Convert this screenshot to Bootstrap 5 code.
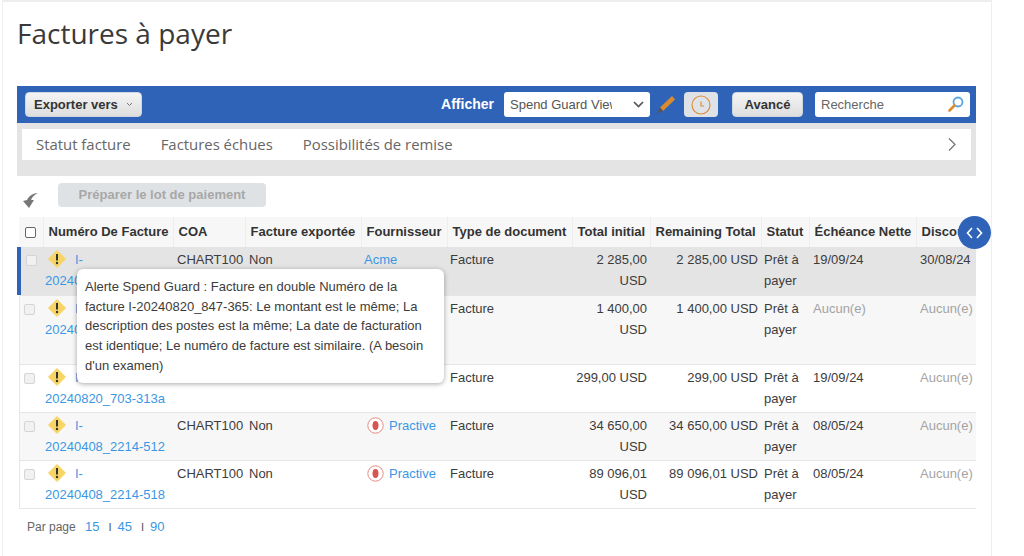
<!DOCTYPE html>
<html lang="fr">
<head>
<meta charset="utf-8">
<title>Factures à payer</title>
<link href="https://cdn.jsdelivr.net/npm/bootstrap@5.3.0/dist/css/bootstrap.min.css" rel="stylesheet">
<style>
html,body{height:556px;overflow:hidden}
body{background:#fff;font-family:"Liberation Sans",Arial,sans-serif;font-size:13px;color:#333}
.shell{margin:0 32px 0 2px;height:556px;border-top:2px solid #eee;border-left:1px solid #f0f0f0;border-right:1px solid #eee;width:990px;padding:0 14px;position:relative}
.page-h{font-family:"Open Sans",sans-serif;font-size:28px;line-height:38px;font-weight:400;color:#3a3a3a;margin:12px 0 34px 0}
.panel-x{width:959px}
.bluebar{background:#2f63b8;height:37px;padding:0 6px 0 8px}
.soft-btn{background:linear-gradient(#f4f4f4,#dedede);border:1px solid #cfd6e2;border-radius:4px;color:#333;font-weight:700;font-size:13px;height:25px;line-height:23px;padding:0 8px;white-space:nowrap}
.exp-btn{width:117px}
.adv-btn{width:71px;padding:0;text-align:center}
.show-lbl{color:#fff;font-weight:700;font-size:14px;margin-right:10px}
.view-sel{width:146px;height:25px;background:#fff;border-radius:3px;padding:0 6px;font-size:13px;color:#555}
.view-sel span{width:102px;overflow:hidden;white-space:nowrap}
.pen-ico{margin-left:6px}
.clock-btn{width:34px;height:25px;background:#dfe3e8;border-radius:4px;margin:0 14px 0 8px}
.search-x{width:155px;height:25px;background:#fff;border-radius:3px;padding:0 6px;color:#666;font-size:13px;margin-left:12px}
.graystrip{background:#e4e4e4;height:53px;padding:6px 5px 0 5px}
.navwhite{background:#fff;height:31px;padding:0 14px;font-family:"Open Sans",sans-serif;font-size:14.9px;color:#666}
.navwhite span{margin-right:30px}
.toolstrip{height:41px;padding:7px 0 0 6px}
.back-ico{margin-top:9px}
.pay-btn{background:#dfe2e5;color:#a8a8a8;font-weight:700;font-size:13px;height:24px;line-height:24px;width:208px;border-radius:4px;text-align:center;margin-left:19px}
.tblwrap{margin-left:2px;width:957px}
table.inv{table-layout:fixed;width:957px;border-collapse:collapse;margin:0}
table.inv th{background:#f7f7f7;font-weight:700;font-size:13px;height:30px;padding:0 5px;white-space:nowrap;overflow:hidden;border-right:1px solid #eee;color:#333;vertical-align:middle}
table.inv td{padding:2px 5px 0 3px;line-height:21px;vertical-align:top;border-bottom:1px solid #e6e6e6;font-size:13px;color:#3c3c3c}
table.inv td:first-child{box-shadow:inset 1px 0 0 #e6e6e6}
table.inv tr.sel td{background:#e4e4e4}
table.inv tr.alt td{background:#f7f7f7}
table.inv tr.sel td:first-child{box-shadow:-2px 0 0 #2f63b8,inset 2px 0 0 #2f63b8}
table.inv td a,.pager a{color:#3b97e3;text-decoration:none}
.r-1{height:48px}.r-2{height:69px}.r-3{height:48px}
.tick{width:11px;height:11px;border:1px solid #d5d5d5;border-radius:2px;background:#f1f1f1;display:block;margin:6px 0 0 2px}
tr.sel .tick{margin-left:4px}
.tickh{width:11px;height:11px;border:1.5px solid #666;border-radius:2px;background:#fff;display:block;margin-left:1px}
table.inv td.id-cell{padding-left:2px}
.warn{display:inline-block;vertical-align:-4px;margin:0 9px 0 3px}
.num{text-align:right;padding-right:3px!important}
.none{color:#a3a3a3!important}
.pad-4{padding-left:4px!important}
.tip-box{position:absolute;left:74px;top:267px;width:367px;height:114px;background:#fff;border-radius:6px;box-shadow:0 1px 5px rgba(0,0,0,.35);padding:8px 8px;font-size:13px;line-height:19.7px;color:#3c3c3c;z-index:5}
.roundb{position:absolute;left:955px;top:214px;width:33px;height:33px;border-radius:50%;background:#2f63b8;z-index:6}
.pager{font-size:12px;color:#666;padding:8px 0 0 10px;line-height:20px}
.pager a{font-size:13px;margin-left:6px}
.pager i{font-style:normal;margin-left:9px;color:#555;font-size:11px}
.vend{display:inline-block;vertical-align:-4px;margin-right:5px;margin-left:3px}
</style>
</head>
<body>
<div class="shell">
  <h1 class="page-h">Factures à payer</h1>
  <div class="panel-x">
    <div class="bluebar d-flex align-items-center">
      <div class="soft-btn exp-btn d-flex align-items-center gap-2">Exporter vers
        <svg width="7" height="5" viewBox="0 0 7 5"><path d="M1 1l2.500 2.500L6 1" fill="none" stroke="#777" stroke-width="1"/></svg>
      </div>
      <div class="ms-auto d-flex align-items-center">
        <span class="show-lbl">Afficher</span>
        <div class="view-sel d-flex align-items-center justify-content-between">
          <span>Spend Guard View</span>
          <svg width="11" height="7" viewBox="0 0 11 7"><path d="M1 1l4.500 4.500L10 1" fill="none" stroke="#555" stroke-width="1.700"/></svg>
        </div>
        <svg class="pen-ico" width="20" height="20" viewBox="0 0 20 20"><path d="M16 1l3 3.500L7 16 4 12.500z" fill="#dc8a2e"/><path d="M4 12.500L7 16 1 18.500z" fill="#555"/></svg>
        <div class="clock-btn d-flex align-items-center justify-content-center">
          <svg width="20" height="20" viewBox="0 0 20 20"><circle cx="10" cy="10" r="9" fill="none" stroke="#dc8f3c" stroke-width="1.200"/><path d="M10 6.500V11h3" fill="none" stroke="#dc8f3c" stroke-width="1.200"/></svg>
        </div>
        <div class="soft-btn adv-btn">Avancé</div>
        <div class="search-x d-flex align-items-center justify-content-between">
          <span>Recherche</span>
          <svg width="17" height="17" viewBox="0 0 17 17"><circle cx="11" cy="6" r="4.500" fill="#fff" stroke="#58a5e6" stroke-width="1.800"/><path d="M7.500 9.500L2.500 14.500" stroke="#dc8a2e" stroke-width="2.600" stroke-linecap="round"/></svg>
        </div>
      </div>
    </div>
    <div class="graystrip">
      <div class="navwhite d-flex align-items-center">
        <span>Statut facture</span><span>Factures échues</span><span>Possibilités de remise</span>
        <svg class="ms-auto" width="10" height="15" viewBox="0 0 10 15"><path d="M2 1.500l6 6-6 6" fill="none" stroke="#777" stroke-width="1.300"/></svg>
      </div>
    </div>
    <div class="toolstrip d-flex align-items-start">
      <svg class="back-ico" width="16" height="16" viewBox="0 0 16 16"><path d="M15 1C10 1 6 4 4 8L0 9l6 7 5-8H8c1-3 3-5 7-7z" fill="#777"/></svg>
      <div class="pay-btn">Préparer le lot de paiement</div>
    </div>
    <div class="tblwrap">
      <table class="inv">
        <colgroup>
          <col style="width:24px"><col style="width:130px"><col style="width:72px"><col style="width:116px"><col style="width:86px"><col style="width:125px"><col style="width:78px"><col style="width:111px"><col style="width:48px"><col style="width:107px"><col style="width:60px">
        </colgroup>
        <thead><tr>
          <th><span class="tickh"></span></th><th>Numéro De Facture</th><th>COA</th><th>Facture exportée</th><th>Fournisseur</th><th>Type de document</th><th>Total initial</th><th>Remaining Total</th><th>Statut</th><th>Échéance Nette</th><th>Discount</th>
        </tr></thead>
        <tbody>
          <tr class="sel r-1"><td><span class="tick"></span></td><td class="id-cell"><svg class="warn" width="18" height="18" viewBox="0 0 18 18"><path d="M9 0.500L17.500 9 9 17.500 0.500 9z" fill="#f7d565" stroke="#f7d565" stroke-linejoin="round"/><path d="M9 4v6.500" stroke="#333" stroke-width="2"/><circle cx="9" cy="13" r="1.200" fill="#333"/></svg><a href="#">I-<br>20240820_847-365</a></td><td class="pad-4">CHART100</td><td class="pad-4">Non</td><td><a href="#">Acme</a></td><td>Facture</td><td class="num">2 285,00 USD</td><td class="num">2 285,00 USD</td><td>Prêt à payer</td><td class="pad-4">19/09/24</td><td class="pad-4">30/08/24</td></tr>
          <tr class="alt r-2"><td><span class="tick"></span></td><td class="id-cell"><svg class="warn" width="18" height="18" viewBox="0 0 18 18"><path d="M9 0.500L17.500 9 9 17.500 0.500 9z" fill="#f7d565" stroke="#f7d565" stroke-linejoin="round"/><path d="M9 4v6.500" stroke="#333" stroke-width="2"/><circle cx="9" cy="13" r="1.200" fill="#333"/></svg><a href="#">I-<br>20240820_847-366</a></td><td></td><td></td><td></td><td>Facture</td><td class="num">1 400,00 USD</td><td class="num">1 400,00 USD</td><td>Prêt à payer</td><td class="none pad-4">Aucun(e)</td><td class="none pad-4">Aucun(e)</td></tr>
          <tr class="r-3"><td><span class="tick"></span></td><td class="id-cell"><svg class="warn" width="18" height="18" viewBox="0 0 18 18"><path d="M9 0.500L17.500 9 9 17.500 0.500 9z" fill="#f7d565" stroke="#f7d565" stroke-linejoin="round"/><path d="M9 4v6.500" stroke="#333" stroke-width="2"/><circle cx="9" cy="13" r="1.200" fill="#333"/></svg><a href="#">I-<br>20240820_703-313a</a></td><td></td><td></td><td></td><td>Facture</td><td class="num">299,00 USD</td><td class="num">299,00 USD</td><td>Prêt à payer</td><td class="pad-4">19/09/24</td><td class="none pad-4">Aucun(e)</td></tr>
          <tr class="alt r-3"><td><span class="tick"></span></td><td class="id-cell"><svg class="warn" width="18" height="18" viewBox="0 0 18 18"><path d="M9 0.500L17.500 9 9 17.500 0.500 9z" fill="#f7d565" stroke="#f7d565" stroke-linejoin="round"/><path d="M9 4v6.500" stroke="#333" stroke-width="2"/><circle cx="9" cy="13" r="1.200" fill="#333"/></svg><a href="#">I-<br>20240408_2214-512</a></td><td class="pad-4">CHART100</td><td class="pad-4">Non</td><td><svg class="vend" width="17" height="17" viewBox="0 0 17 17"><circle cx="8.500" cy="8.500" r="7.700" fill="#fff" stroke="#e58a85" stroke-width="1"/><path d="M8.500 4c2.200 0 3 1.800 3 4.500s-1 4.500-3 4.500-3-1.800-3-4.500 .8-4.500 3-4.500z" fill="#d9534f"/></svg><a href="#">Practive</a></td><td>Facture</td><td class="num">34 650,00 USD</td><td class="num">34 650,00 USD</td><td>Prêt à payer</td><td class="pad-4">08/05/24</td><td class="none pad-4">Aucun(e)</td></tr>
          <tr class="r-3"><td><span class="tick"></span></td><td class="id-cell"><svg class="warn" width="18" height="18" viewBox="0 0 18 18"><path d="M9 0.500L17.500 9 9 17.500 0.500 9z" fill="#f7d565" stroke="#f7d565" stroke-linejoin="round"/><path d="M9 4v6.500" stroke="#333" stroke-width="2"/><circle cx="9" cy="13" r="1.200" fill="#333"/></svg><a href="#">I-<br>20240408_2214-518</a></td><td class="pad-4">CHART100</td><td class="pad-4">Non</td><td><svg class="vend" width="17" height="17" viewBox="0 0 17 17"><circle cx="8.500" cy="8.500" r="7.700" fill="#fff" stroke="#e58a85" stroke-width="1"/><path d="M8.500 4c2.200 0 3 1.800 3 4.500s-1 4.500-3 4.500-3-1.800-3-4.500 .8-4.500 3-4.500z" fill="#d9534f"/></svg><a href="#">Practive</a></td><td>Facture</td><td class="num">89 096,01 USD</td><td class="num">89 096,01 USD</td><td>Prêt à payer</td><td class="pad-4">08/05/24</td><td class="none pad-4">Aucun(e)</td></tr>
        </tbody>
      </table>
    </div>
    <div class="pager">Par page <a href="#">15</a><i>I</i><a href="#">45</a><i>I</i><a href="#">90</a></div>
  </div>
  <div class="tip-box">Alerte Spend Guard : Facture en double Numéro de la facture I-20240820_847-365: Le montant est le même; La description des postes est la même; La date de facturation est identique; Le numéro de facture est similaire. (A besoin d'un examen)</div>
  <div class="roundb d-flex align-items-center justify-content-center">
    <svg width="17" height="12" viewBox="0 0 17 12"><path d="M6 1L1.500 6 6 11M11 1l4.500 5L11 11" fill="none" stroke="#fff" stroke-width="1.600"/></svg>
  </div>
</div>
<script src="https://cdn.jsdelivr.net/npm/bootstrap@5.3.0/dist/js/bootstrap.bundle.min.js"></script>
</body>
</html>
